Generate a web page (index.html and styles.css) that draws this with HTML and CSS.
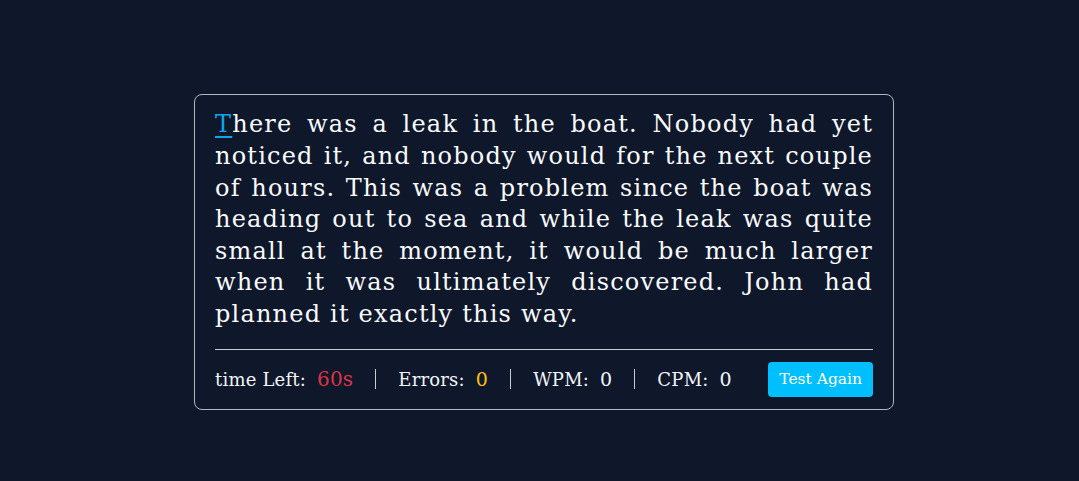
FILE: index.html
```html
<!DOCTYPE html>
<html lang="en">
<head>
<meta charset="utf-8">
<title>Typing Test</title>
<link rel="stylesheet" href="styles.css">
</head>
<body>
<main class="page">
  <section class="card">
    <p class="passage"><span class="current">T</span>here was a leak in the boat. Nobody had yet noticed it, and nobody would for the next couple of hours. This was a problem since the boat was heading out to sea and while the leak was quite small at the moment, it would be much larger when it was ultimately discovered. John had planned it exactly this way.</p>
    <div class="stats">
      <div class="stat"><span class="label">time Left:</span><span class="value time">60s</span></div>
      <span class="sep"></span>
      <div class="stat"><span class="label">Errors:</span><span class="value errors">0</span></div>
      <span class="sep"></span>
      <div class="stat"><span class="label">WPM:</span><span class="value">0</span></div>
      <span class="sep"></span>
      <div class="stat"><span class="label">CPM:</span><span class="value">0</span></div>
      <button class="again" type="button">Test Again</button>
    </div>
  </section>
</main>
</body>
</html>
```

FILE: styles.css
```css
* { box-sizing: border-box; }
html, body { margin: 0; height: 100%; }
body {
  background: #0f172a;
  color: #f1f5f9;
  font-family: "DejaVu Serif", "Liberation Serif", serif;
}
.page {
  min-height: 100%;
  display: flex;
  justify-content: center;
  align-items: center;
  padding: 23px 0 0 9px;
}
.card {
  width: 700px;
  border: 1px solid #b4b8c0;
  border-radius: 8px;
  padding: 14px 20px 12px;
}
.passage {
  margin: 0;
  font-size: 24px;
  letter-spacing: 1.2px;
  line-height: 31.6px;
  text-align: justify;
  color: #f8fafc;
}
.current {
  color: #0ea5e9;
  text-decoration: underline;
  text-decoration-thickness: 2px;
  text-underline-offset: 4px;
}
.stats {
  margin-top: 18px;
  border-top: 1px solid #c8ccd2;
  padding-top: 12px;
  display: flex;
  align-items: center;
  font-size: 18px;
  letter-spacing: 0.2px;
}
.stat { display: flex; align-items: baseline; gap: 11px; }
.value { font-size: 19px; }
.time { color: #dc3545; font-size: 20px; }
.errors { color: #ffc107; }
.sep {
  width: 1px;
  height: 20px;
  background: #c8ccd2;
  margin: 0 22px;
}
.again {
  margin-left: auto;
  background: #00bfff;
  color: #fff;
  border: 0;
  border-radius: 4px;
  height: 35px;
  padding: 0 11px;
  font-family: inherit;
  font-size: 15.5px;
  cursor: pointer;
}
```
